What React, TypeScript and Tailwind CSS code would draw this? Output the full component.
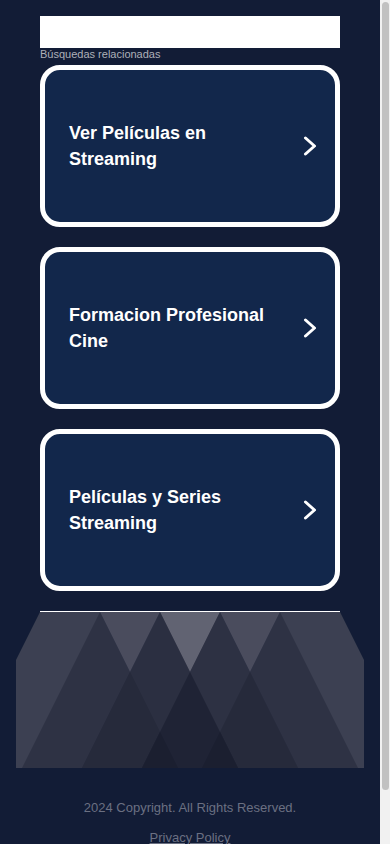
import React from "react";

const items = [
  "Ver Películas en Streaming",
  "Formacion Profesional Cine",
  "Películas y Series Streaming",
];

function Chevron() {
  return (
    <svg width="14" height="20" viewBox="0 0 14 20" fill="none" className="shrink-0">
      <path d="M2.5 2 L11.5 10 L2.5 18" stroke="white" strokeWidth="3" strokeLinecap="round" strokeLinejoin="round" />
    </svg>
  );
}

function Mountains() {
  return (
    <svg width="348" height="156" viewBox="0 0 348 156" className="block mx-auto">
      <polygon points="24,0 324,0 348,48 348,156 0,156 0,48" fill="#3c4052" />
      <polygon points="84,0 144,0 114,60" fill="#4a4c5d" />
      <polygon points="144,0 204,0 174,60" fill="#616372" />
      <polygon points="204,0 264,0 234,60" fill="#4a4c5d" />
      <polygon points="84,0 6,156 162,156" fill="#2e3244" />
      <polygon points="264,0 186,156 342,156" fill="#2e3244" />
      <polygon points="144,0 66,156 222,156" fill="#2b2f41" />
      <polygon points="204,0 126,156 282,156" fill="#2d3143" />
      <polygon points="114,60 66,156 162,156" fill="#262a3b" />
      <polygon points="234,60 186,156 282,156" fill="#262a3b" />
      <polygon points="174,60 126,156 222,156" fill="#1f2335" />
      <polygon points="144,120 126,156 162,156" fill="#1b1f30" />
      <polygon points="204,120 186,156 222,156" fill="#1b1f30" />
    </svg>
  );
}

export default function App() {
  return (
    <div className="flex min-h-screen font-['Liberation_Sans',Arial,sans-serif]">
      <main className="flex-1 bg-[#121c36] pt-4 pb-[56px]">
        <div className="w-[300px] mx-auto">
          <div className="h-8 bg-white" />
          <div className="text-[11px] leading-[13px] text-[#aeb0b9]">Búsquedas relacionadas</div>
          <div className="mt-1 flex flex-col gap-5">
            {items.map((t) => (
              <div
                key={t}
                className="h-[162px] rounded-[20px] border-[5px] border-white bg-[#12274b] flex items-center justify-between pl-6 pr-[18px]"
              >
                <span className="text-[18px] leading-[26px] font-bold text-white max-w-[210px]">{t}</span>
                <Chevron />
              </div>
            ))}
          </div>
          <div className="mt-5 h-px bg-white" />
        </div>
        <Mountains />
        <div className="mt-[30px] flex flex-col items-center text-[13px] leading-[20px] text-[#6b7082]">
          <div>2024 Copyright. All Rights Reserved.</div>
          <a className="mt-[10px] underline">Privacy Policy</a>
        </div>
      </main>
      <aside className="w-[10px] shrink-0 bg-[#f1f1f1] px-[1.5px] pt-[2px]">
        <div className="h-[788px] rounded-full bg-[#c1c1c1]" />
      </aside>
    </div>
  );
}
